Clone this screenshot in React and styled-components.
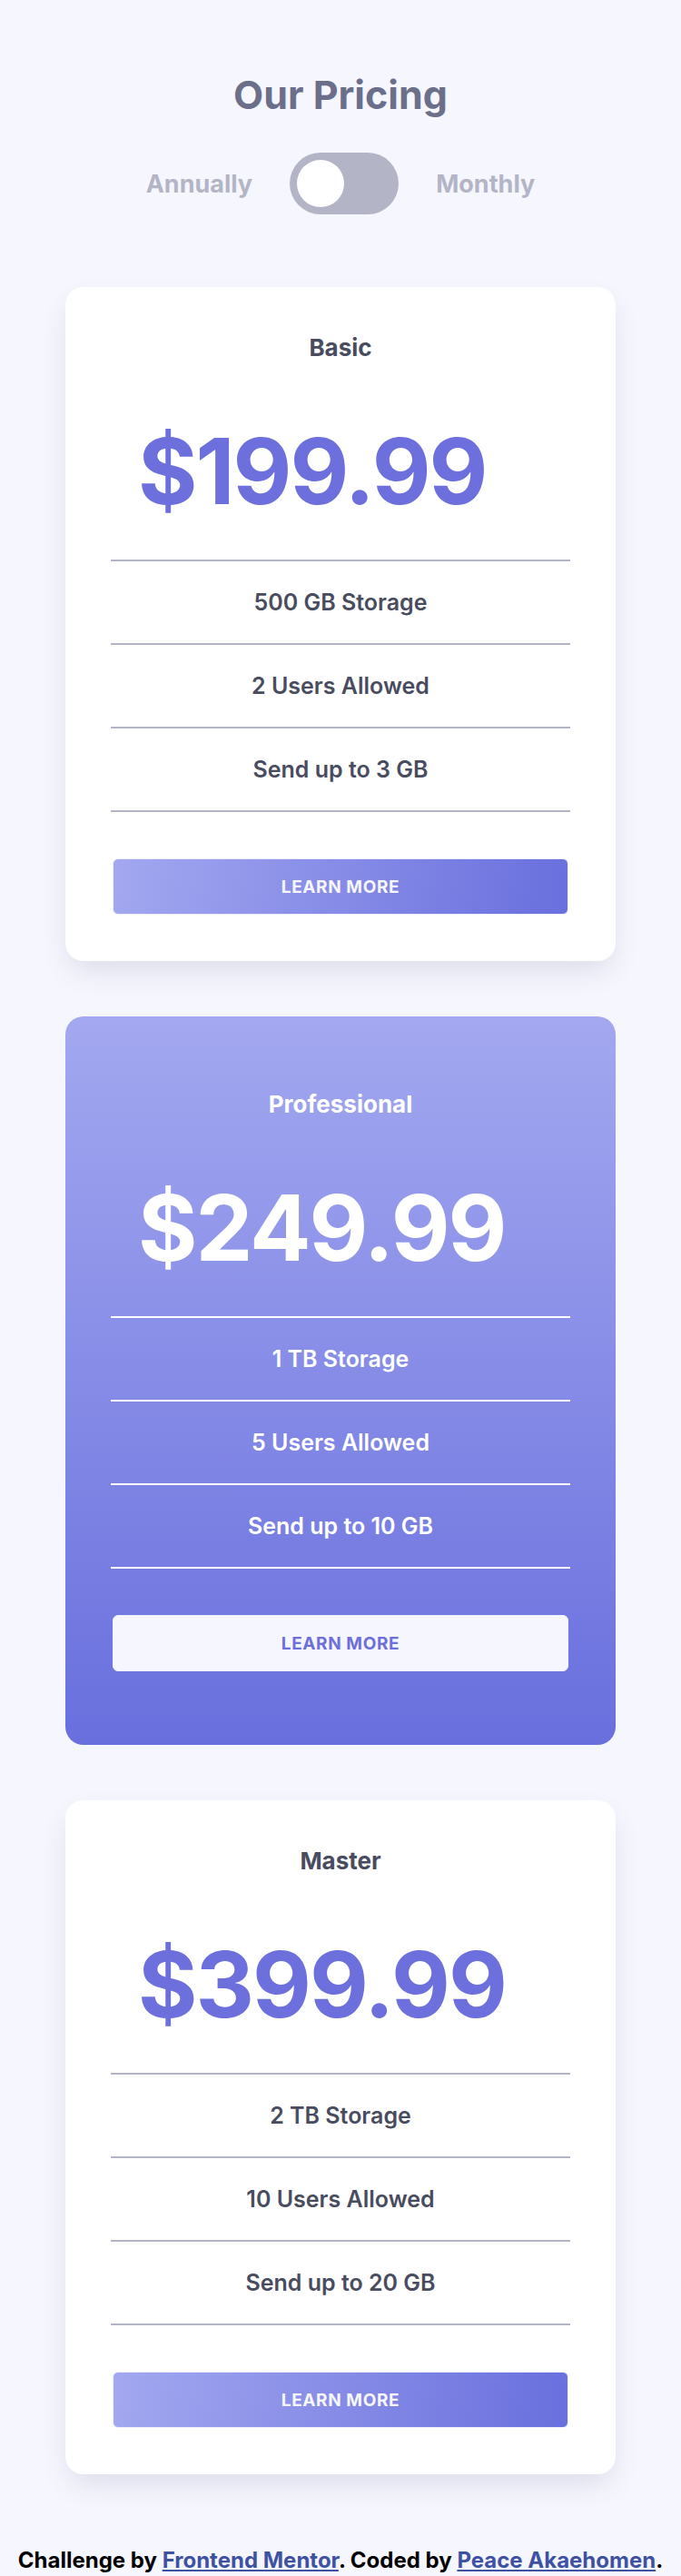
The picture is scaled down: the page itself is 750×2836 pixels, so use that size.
import React, { useState } from "react";
import styled, { createGlobalStyle } from "styled-components";

const GlobalStyle = createGlobalStyle`
  body {
    margin: 0;
    background-color: #f6f6fe;
    font-family: Inter, "Noto Sans", sans-serif;
  }
`;

const Page = styled.main`
  display: flex;
  flex-direction: column;
  align-items: center;
  padding-top: 83px;
`;

const Title = styled.h1`
  margin: 0;
  font-size: 43px;
  line-height: 1;
  font-weight: 700;
  color: #6c6f8a;
`;

const ToggleRow = styled.div`
  display: flex;
  align-items: center;
  gap: 41px;
  margin-top: 42px;
`;

const ToggleLabel = styled.span`
  font-size: 27px;
  font-weight: 700;
  color: #b3b5c6;
`;

const Switch = styled.button`
  width: 120px;
  height: 68px;
  border: none;
  border-radius: 34px;
  padding: 0 8px;
  background: ${(props) =>
    props.$on ? "linear-gradient(90deg, #a3a8f0, #696fdd)" : "#b3b5c6"};
  display: flex;
  align-items: center;
  justify-content: ${(props) => (props.$on ? "flex-end" : "flex-start")};
  cursor: pointer;
`;

const Knob = styled.span`
  width: 52px;
  height: 52px;
  border-radius: 50%;
  background: #fff;
`;

const CardList = styled.section`
  display: flex;
  flex-direction: column;
  gap: 61px;
  margin-top: 80px;
  width: 606px;
`;

const Card = styled.article`
  padding: ${(props) => (props.$featured ? "84px 50px 81px" : "54px 50px 51px")};
  border-radius: 20px;
  background: ${(props) =>
    props.$featured ? "linear-gradient(180deg, #a3a8f0, #696fdd)" : "#fff"};
  box-shadow: ${(props) =>
    props.$featured ? "none" : "0 14px 32px -6px rgba(73, 76, 120, 0.16)"};
  color: ${(props) => (props.$featured ? "#fff" : "#494c5f")};
`;

const PlanName = styled.h2`
  margin: 0;
  text-align: center;
  font-size: 26px;
  line-height: 1;
  font-weight: 700;
`;

const Price = styled.div`
  margin-top: 73px;
  padding-left: 30px;
  font-size: 100px;
  line-height: 1;
  font-weight: 700;
  letter-spacing: -2px;
  color: ${(props) => (props.$featured ? "#fff" : "#6d70dc")};
`;

const Features = styled.ul`
  list-style: none;
  margin: 47px 0 0;
  padding: 0;
  border-top: 2px solid ${(props) => (props.$featured ? "#fff" : "#b3b5c6")};
`;

const Feature = styled.li`
  height: 90px;
  display: flex;
  align-items: center;
  justify-content: center;
  font-size: 25px;
  font-weight: 600;
  border-bottom: 2px solid ${(props) => (props.$featured ? "#fff" : "#b3b5c6")};
`;

const LearnButton = styled.button`
  display: block;
  width: calc(100% - 4px);
  height: 62px;
  margin: 51px 2px 0;
  border: 1px solid ${(props) => (props.$featured ? "#f0f0fc" : "#eef0fd")};
  border-radius: 6px;
  background: ${(props) =>
    props.$featured ? "#f6f6fe" : "linear-gradient(100deg, #a3a8f0, #696fdd)"};
  color: ${(props) => (props.$featured ? "#6d70dc" : "#f6f6fe")};
  font-family: inherit;
  font-size: 19px;
  font-weight: 700;
  letter-spacing: 0.6px;
  cursor: pointer;
`;

const Footer = styled.footer`
  margin-top: 83px;
  padding-bottom: 4px;
  font-size: 24px;
  line-height: 1;
  font-weight: 700;
  color: #000;
  text-align: center;

  a {
    color: #3e52a3;
  }
`;

const plans = [
  { name: "Basic", annual: "199.99", monthly: "19.99", features: ["500 GB Storage", "2 Users Allowed", "Send up to 3 GB"] },
  { name: "Professional", annual: "249.99", monthly: "24.99", featured: true, features: ["1 TB Storage", "5 Users Allowed", "Send up to 10 GB"] },
  { name: "Master", annual: "399.99", monthly: "39.99", features: ["2 TB Storage", "10 Users Allowed", "Send up to 20 GB"] },
];

const App = () => {
  const [monthly, setMonthly] = useState(false);

  return (
    <>
      <GlobalStyle />
      <Page>
        <Title>Our Pricing</Title>
        <ToggleRow>
          <ToggleLabel>Annually</ToggleLabel>
          <Switch $on={monthly} aria-label="Toggle billing" onClick={() => setMonthly(!monthly)}>
            <Knob />
          </Switch>
          <ToggleLabel>Monthly</ToggleLabel>
        </ToggleRow>

        <CardList>
          {plans.map((plan) => (
            <Card key={plan.name} $featured={plan.featured}>
              <PlanName>{plan.name}</PlanName>
              <Price $featured={plan.featured}>${monthly ? plan.monthly : plan.annual}</Price>
              <Features $featured={plan.featured}>
                {plan.features.map((f) => (
                  <Feature key={f} $featured={plan.featured}>{f}</Feature>
                ))}
              </Features>
              <LearnButton $featured={plan.featured}>LEARN MORE</LearnButton>
            </Card>
          ))}
        </CardList>

        <Footer>
          Challenge by <a href="#">Frontend Mentor</a>. Coded by <a href="#">Peace Akaehomen</a>.
        </Footer>
      </Page>
    </>
  );
};

export default App;
